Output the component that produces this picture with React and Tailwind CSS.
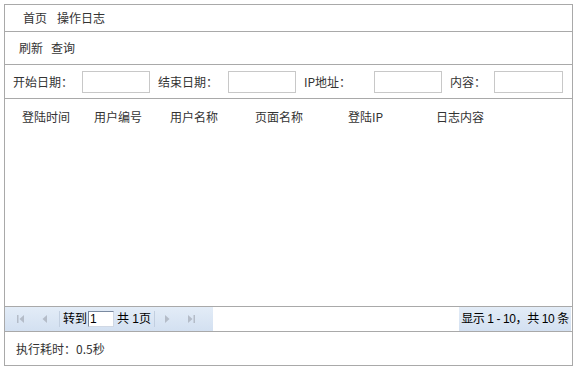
import React from 'react';

const columns = [
  { label: '登陆时间', w: 'w-[72px]' },
  { label: '用户编号', w: 'w-[76px]' },
  { label: '用户名称', w: 'w-[85px]' },
  { label: '页面名称', w: 'w-[93px]' },
  { label: '登陆IP', w: 'w-[88px]' },
  { label: '日志内容', w: 'w-[80px]' },
];

const filters = [
  { label: '开始日期：', w: 'w-[69px]', input: 'w-[68px] mr-[8px]' },
  { label: '结束日期：', w: 'w-[70px]', input: 'w-[68px] mr-[8px]' },
  { label: 'IP地址：', w: 'w-[70px]', input: 'w-[68px] mr-[8px]' },
  { label: '内容：', w: 'w-[44px]', input: 'w-[69px]' },
];

const PagerIcon = ({ dir, bar }) => (
  <svg width="10" height="10" viewBox="0 0 10 10" className="shrink-0">
    {dir === 'left' ? (
      <>
        {bar && <rect x="1" y="1" width="1.5" height="8" fill="#b4bcc8" />}
        <path d="M8 1 L3.5 5 L8 9 Z" fill="#b4bcc8" />
      </>
    ) : (
      <>
        <path d="M2 1 L6.5 5 L2 9 Z" fill="#b4bcc8" />
        {bar && <rect x="7.5" y="1" width="1.5" height="8" fill="#b4bcc8" />}
      </>
    )}
  </svg>
);

const App = () => {
  return (
    <div className="w-[577px] h-[371px] bg-white pt-[4px] pl-[4px] font-['Noto_Sans_CJK_SC',sans-serif] text-[12px] text-[#333]">
      <div className="w-[569px] h-[362px] border border-[#a9a9a9] flex flex-col">
        {/* breadcrumb */}
        <div className="h-[27px] border-b border-[#a9a9a9] flex items-center pl-[18px] gap-[10px]">
          <span>首页</span>
          <span>操作日志</span>
        </div>

        {/* toolbar */}
        <div className="h-[33px] border-b border-[#a9a9a9] flex items-center pl-[14px] gap-[8px]">
          <span>刷新</span>
          <span>查询</span>
        </div>

        {/* filters */}
        <div className="h-[34px] border-b border-[#a9a9a9] flex items-center pl-[8px]">
          {filters.map((f) => (
            <div key={f.label} className="flex items-center">
              <span className={f.w}>{f.label}</span>
              <div className={`h-[22px] border border-[#c8c8c8] ${f.input}`} />
            </div>
          ))}
        </div>

        {/* grid */}
        <div className="flex-1 border-b border-[#a9a9a9]">
          <div className="flex items-center h-[36px] pl-[17px]">
            {columns.map((c) => (
              <span key={c.label} className={c.w}>{c.label}</span>
            ))}
          </div>
        </div>

        {/* pager */}
        <div className="h-[25px] border-b border-[#a9a9a9] flex items-stretch justify-between font-['Liberation_Sans','Noto_Sans_CJK_SC',sans-serif]">
          <div className="w-[208px] bg-gradient-to-b from-[#e3ecf7] to-[#d3e0f1] flex items-center pl-[5px] text-black">
            <div className="w-[22px] flex justify-center"><PagerIcon dir="left" bar /></div>
            <div className="w-[24px] flex justify-center"><PagerIcon dir="left" /></div>
            <span className="w-px h-[16px] bg-[#c2cfe0] mx-[3px]" />
            <span>转到</span>
            <div className="w-[26px] h-[16px] border border-[#7a8aa0] border-r-[#d0d8e4] border-b-[#d0d8e4] bg-white ml-[1px] leading-[14px] pl-[1px]">1</div>
            <span className="ml-[3px]">共 1页</span>
            <span className="w-px h-[16px] bg-[#c2cfe0] mx-[3px]" />
            <div className="w-[20px] flex justify-center"><PagerIcon dir="right" /></div>
            <div className="w-[26px] flex justify-center"><PagerIcon dir="right" bar /></div>
          </div>
          <div className="w-[112px] mr-[1px] bg-gradient-to-b from-[#e3ecf7] to-[#d3e0f1] flex items-center justify-center text-black whitespace-nowrap tracking-[-0.4px]">
            显示 1 - 10，共 10 条
          </div>
        </div>

        {/* footer */}
        <div className="h-[33px] flex items-center pl-[11px]">
          执行耗时：0.5秒
        </div>
      </div>
    </div>
  );
};

export default App;
